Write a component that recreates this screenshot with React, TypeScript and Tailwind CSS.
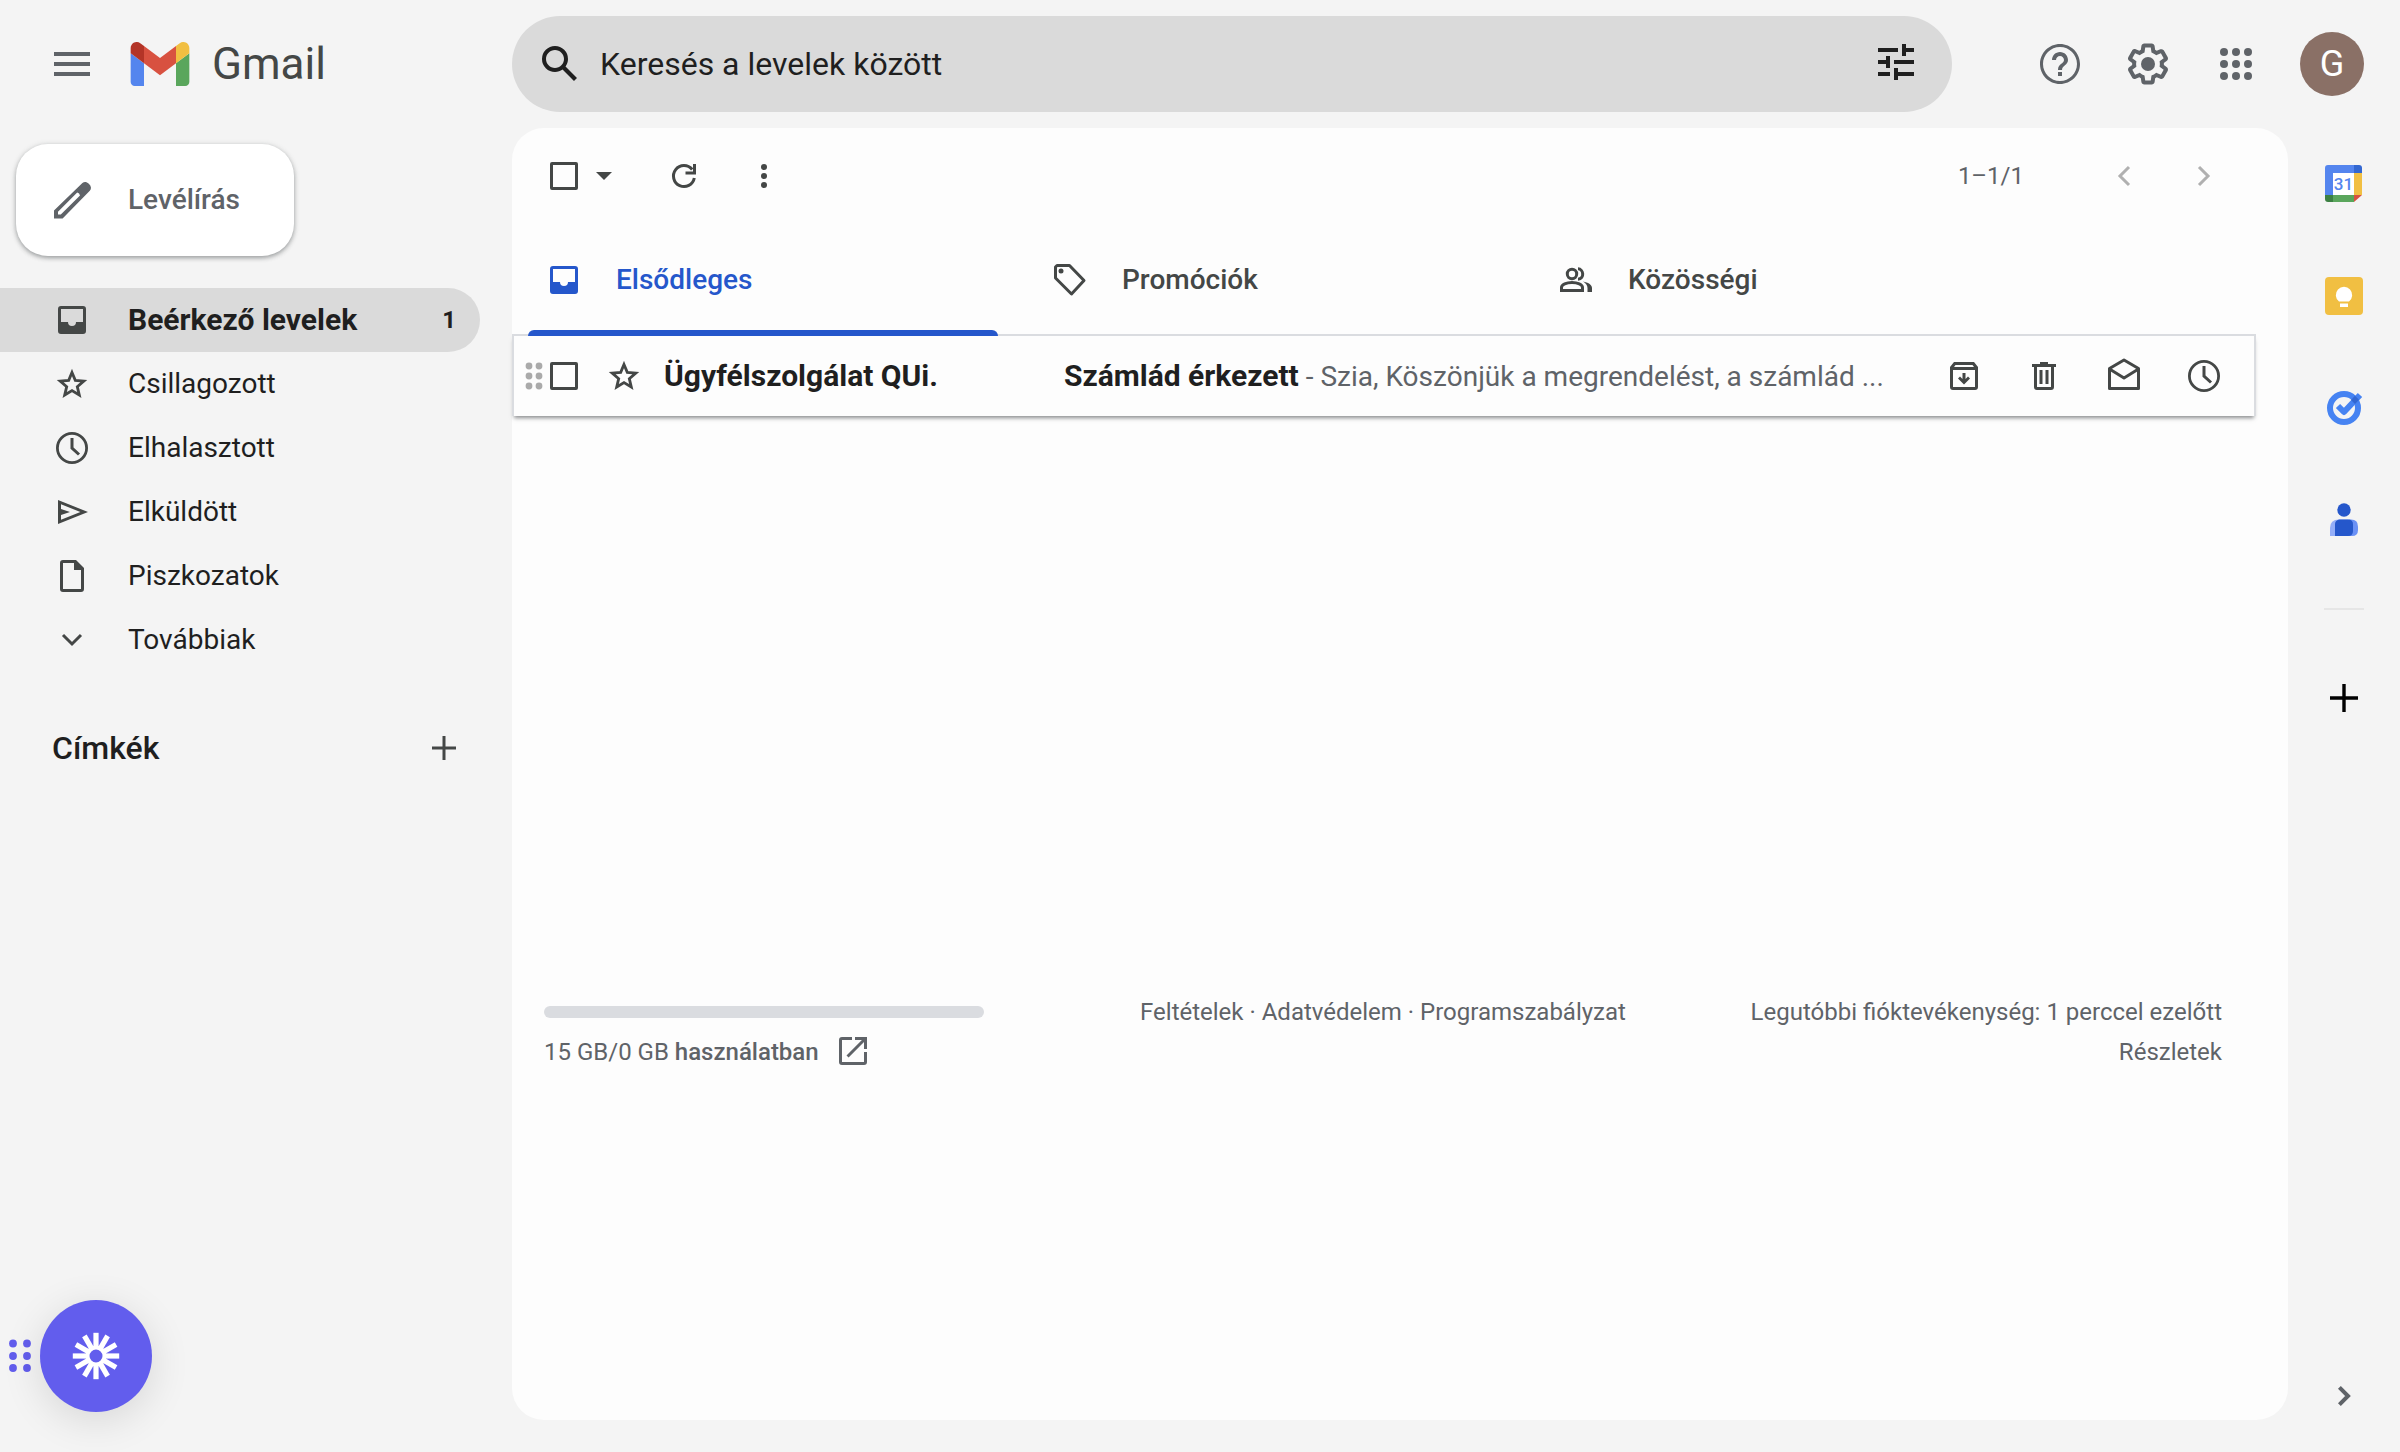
import React from 'react';

interface IconProps {
  children: React.ReactNode;
  className?: string;
  viewBox?: string;
}

const Icon: React.FC<IconProps> = ({ children, className = 'w-10 h-10', viewBox = '0 0 40 40' }) => (
  <svg className={`shrink-0 ${className}`} viewBox={viewBox} fill="currentColor" aria-hidden="true">
    {children}
  </svg>
);

const InboxIcon = () => (
  <Icon>
    <path
      fillRule="evenodd"
      d="M9 6h22a3 3 0 0 1 3 3v22a3 3 0 0 1-3 3H9a3 3 0 0 1-3-3V9a3 3 0 0 1 3-3zm0 3v13h7a4 4 0 0 0 8 0h7V9z"
    />
  </Icon>
);

const StarIcon = () => (
  <Icon>
    <path
      fill="none"
      stroke="currentColor"
      strokeWidth="2.8"
      d="M20 8.5l3.3 7.9 8.5.7-6.5 5.6 2 8.3-7.3-4.4-7.3 4.4 2-8.3-6.5-5.6 8.5-.7z"
    />
  </Icon>
);

const ClockIcon = () => (
  <Icon>
    <circle cx="20" cy="20" r="14.6" fill="none" stroke="currentColor" strokeWidth="2.8" />
    <path fill="none" stroke="currentColor" strokeWidth="3" d="M20 10v10l7 6.5" />
  </Icon>
);

const SendIcon = () => (
  <Icon>
    <path fillRule="evenodd" d="M6 8l30 12L6 32zm3 4.3V17l9 3-9 3v4.7L28.4 20z" />
  </Icon>
);

const FileIcon = () => (
  <Icon>
    <path
      fillRule="evenodd"
      d="M11 4h13l8 8v21a3 3 0 0 1-3 3H11a3 3 0 0 1-3-3V7a3 3 0 0 1 3-3zm0 3v26h18V14h-7V7z"
    />
  </Icon>
);

const ChevronDownIcon = () => (
  <Icon>
    <path fill="none" stroke="currentColor" strokeWidth="3" d="M11 15l9 9 9-9" />
  </Icon>
);

const TagIcon = () => (
  <Icon>
    <path
      fill="none"
      stroke="currentColor"
      strokeWidth="3"
      strokeLinejoin="round"
      d="M7 5.500h12.500L34 20.500 21.500 34 5.500 18V7z"
    />
    <circle cx="11" cy="11" r="2.500" />
  </Icon>
);

const PeopleIcon = () => (
  <Icon>
    <g fill="none" stroke="currentColor" strokeWidth="3">
      <circle cx="16" cy="14" r="4.700" />
      <path d="M5.500 30.500v-3c0-3 5-5 10.500-5s10.500 2 10.500 5v3z" />
      <path d="M22 8.800c5.500 0 7 10 0 10.400" />
    </g>
    <path d="M27 21.500c5 1 9 3 9 6.500v4h-4.500v-4c0-3-2-5-4.500-6.500z" />
  </Icon>
);

const GmailLogo = () => (
  <svg className="w-[60px] h-11 shrink-0" viewBox="52 42 88 66" aria-hidden="true">
    <path fill="#5485ee" d="M58 108h14V74L52 59v43c0 3.32 2.69 6 6 6" />
    <path fill="#5aa65c" d="M120 108h14c3.32 0 6-2.69 6-6V59l-20 15" />
    <path fill="#f1bf42" d="M120 48v26l20-15v-8c0-7.42-8.47-11.65-14.4-7.2" />
    <path fill="#d85140" d="M72 74V48l24 18 24-18v26L96 92" />
    <path fill="#b33427" d="M52 51v8l20 15V48l-5.6-4.2c-5.94-4.45-14.4-.22-14.4 7.2" />
  </svg>
);

const Header = () => (
  <header className="flex items-center h-32 pr-9 text-[#5f6368]">
    <div className="flex items-center w-[512px] shrink-0 pl-12">
      <button aria-label="Főmenü">
        <Icon className="w-12 h-12" viewBox="0 0 24 24">
          <path d="M3 18h18v-2H3v2zm0-5h18v-2H3v2zm0-7v2h18V6H3z" />
        </Icon>
      </button>
      <a href="#inbox" className="flex items-center gap-[22px] ml-[34px]">
        <GmailLogo />
        <span className="text-[44px] leading-[48px] text-[#444746]">Gmail</span>
      </a>
    </div>

    <form className="flex items-center flex-1 max-w-[1440px] h-24 pl-6 pr-8 gap-4 rounded-full bg-[#dadada] text-[#1f1f1f]">
      <button type="button" aria-label="Keresés">
        <Icon className="w-12 h-12" viewBox="0 0 24 24">
          <path d="M20.490 19l-5.730-5.730C15.530 12.200 16 10.910 16 9.500A6.500 6.500 0 1 0 9.500 16c1.410 0 2.700-.470 3.770-1.240L19 20.490 20.490 19zM5 9.500C5 7.010 7.010 5 9.500 5S14 7.010 14 9.500 11.990 14 9.500 14 5 11.990 5 9.500z" />
        </Icon>
      </button>
      <input
        type="text"
        aria-label="Keresés a levelek között"
        placeholder="Keresés a levelek között"
        className="flex-1 min-w-0 bg-transparent text-[32px] leading-10 outline-none placeholder:text-[#1f1f1f]"
      />
      <button type="button" aria-label="Speciális keresés">
        <Icon className="w-12 h-12" viewBox="0 1 24 24">
          <path d="M3 17v2h6v-2H3zM3 5v2h10V5H3zm10 16v-2h8v-2h-8v-2h-2v6h2zM7 9v2H3v2h4v2h2V9H7zm14 4v-2H11v2h10zm-6-4h2V7h4V5h-4V3h-2v6z" />
        </Icon>
      </button>
    </form>

    <div className="flex items-center gap-10 ml-auto">
      <button aria-label="Súgó">
        <Icon className="w-12 h-12" viewBox="0 0 24 24">
          <path d="M11 18h2v-2h-2v2zm1-16C6.480 2 2 6.480 2 12s4.480 10 10 10 10-4.480 10-10S17.520 2 12 2zm0 18.500c-4.690 0-8.500-3.810-8.500-8.500S7.310 3.500 12 3.500s8.500 3.810 8.500 8.500-3.810 8.500-8.500 8.500zM12 6c-2.210 0-4 1.790-4 4h2c0-1.100.9-2 2-2s2 .9 2 2c0 2-3 1.750-3 5h2c0-2.250 3-2.500 3-5 0-2.210-1.790-4-4-4z" />
        </Icon>
      </button>
      <button aria-label="Beállítások">
        <Icon className="w-12 h-12" viewBox="0 0 24 24">
          <path d="M13.850 22.250h-3.700c-.74 0-1.360-.54-1.450-1.270l-.27-1.890c-.27-.14-.53-.29-.79-.46l-1.800.72c-.7.26-1.470-.03-1.810-.65L2.200 15.530c-.35-.66-.2-1.440.36-1.880l1.530-1.190c-.01-.15-.02-.3-.02-.46 0-.15.01-.31.02-.46l-1.520-1.190c-.59-.45-.74-1.260-.37-1.880l1.850-3.190c.34-.62 1.110-.9 1.790-.63l1.810.73c.26-.17.52-.32.78-.46l.27-1.910c.09-.7.71-1.250 1.440-1.250h3.700c.74 0 1.360.54 1.450 1.270l.27 1.890c.27.14.53.29.79.46l1.800-.72c.71-.26 1.480.03 1.820.65l1.840 3.180c.36.66.2 1.440-.36 1.880l-1.520 1.190c.01.15.02.3.02.46s-.01.31-.02.46l1.520 1.190c.56.45.72 1.230.37 1.860l-1.860 3.220c-.34.62-1.110.9-1.800.63l-1.800-.72c-.26.17-.52.32-.78.46l-.27 1.910c-.1.68-.72 1.220-1.460 1.220zm-3.230-2h2.760l.37-2.550.53-.22c.44-.18.88-.44 1.340-.78l.45-.34 2.380.96 1.380-2.400-2.030-1.580.07-.56c.03-.26.06-.51.06-.78s-.03-.53-.06-.78l-.07-.56 2.030-1.580-1.390-2.400-2.390.96-.45-.35c-.42-.32-.87-.58-1.330-.77l-.52-.22-.37-2.550h-2.760l-.37 2.550-.53.21c-.44.19-.88.44-1.340.79l-.45.33-2.380-.95-1.390 2.390 2.030 1.580-.07.56a7 7 0 0 0-.06.79c0 .26.02.53.06.78l.07.56-2.030 1.580 1.380 2.400 2.390-.96.45.35c.43.33.86.58 1.330.77l.53.22.38 2.550z" />
          <circle cx="12" cy="12" r="3.5" />
        </Icon>
      </button>
      <button aria-label="Google-alkalmazások">
        <Icon className="w-12 h-12" viewBox="0 0 24 24">
          {[6, 12, 18].map((y) => [6, 12, 18].map((x) => <circle key={`${x}-${y}`} cx={x} cy={y} r="2" />))}
        </Icon>
      </button>
      <button className="w-16 h-16 rounded-full bg-[#8a7066] text-white text-4xl">G</button>
    </div>
  </header>
);

const Sidebar = () => {
  const navItems = [
    { id: 'inbox', label: 'Beérkező levelek', icon: <InboxIcon />, count: 1 },
    { id: 'starred', label: 'Csillagozott', icon: <StarIcon /> },
    { id: 'snoozed', label: 'Elhalasztott', icon: <ClockIcon /> },
    { id: 'sent', label: 'Elküldött', icon: <SendIcon /> },
    { id: 'drafts', label: 'Piszkozatok', icon: <FileIcon /> },
    { id: 'more', label: 'Továbbiak', icon: <ChevronDownIcon /> },
  ];

  return (
    <aside className="w-[512px] shrink-0 pr-8 pt-4">
      <button className="flex items-center gap-8 w-[278px] h-28 ml-4 pl-8 rounded-[32px] bg-white text-[28px] font-medium text-[#5f6368] shadow-[0_2px_4px_rgba(60,64,67,0.4),0_1px_6px_rgba(60,64,67,0.15)]">
        <Icon className="w-12 h-12" viewBox="0 0 24 24">
          <path
            fillRule="evenodd"
            d="M20.400 3.900c-1.200-1.200-2.300-1.200-3.200-.35L3 17.250V21.300h4.300L20.900 7.400c.9-1 .8-2.300-.5-3.500zM6.400 19.300H5v-1.400l9.600-9.600q1.200.2 1.400 1.400z"
          />
        </Icon>
        Levélírás
      </button>

      <nav className="mt-8">
        {navItems.map((item) => (
          <a
            key={item.id}
            href={`#${item.id}`}
            className={`flex items-center h-16 pl-[52px] pr-6 gap-9 rounded-r-full leading-10 ${
              item.count ? 'bg-[#dadada] text-3xl font-bold' : 'text-[28px]'
            }`}
          >
            <span className="text-[#444746]">{item.icon}</span>
            <span className="flex-1">{item.label}</span>
            {item.count && <span className="text-2xl">{item.count}</span>}
          </a>
        ))}
      </nav>

      <div className="flex items-center justify-between mt-14 pl-[52px] pr-4">
        <h2 className="text-[32px] leading-10 font-medium">Címkék</h2>
        <button aria-label="Új címke" className="text-[#444746]">
          <Icon>
            <path d="M8 18.500h24v3H8zM18.500 8h3v24h-3z" />
          </Icon>
        </button>
      </div>
    </aside>
  );
};

const Toolbar = () => (
  <div className="flex items-center h-24 pl-[38px] pr-16 text-[#444746]">
    <input
      type="checkbox"
      aria-label="Összes kijelölése"
      className="w-7 h-7 appearance-none rounded-xs border-3 border-[#444746]"
    />
    <button aria-label="Kijelölés" className="ml-1.5">
      <Icon>
        <path d="M12 16h16l-8 8z" />
      </Icon>
    </button>
    <button aria-label="Frissítés" className="ml-10">
      <Icon>
        <path fill="none" stroke="currentColor" strokeWidth="3" d="M28.200 13.500A10.500 10.500 0 1 0 30.300 22" />
        <path d="M32 8v10.500H21.500v-3H29V8z" />
      </Icon>
    </button>
    <button aria-label="Továbbiak" className="ml-10">
      <Icon>
        <circle cx="20" cy="11" r="3" />
        <circle cx="20" cy="20" r="3" />
        <circle cx="20" cy="29" r="3" />
      </Icon>
    </button>
    <span className="ml-auto text-2xl text-[#5f6368]">1–1/1</span>
    <div className="flex gap-10 ml-20 text-[#b0b0b0]">
      <button aria-label="Újabbak">
        <Icon>
          <path fill="none" stroke="currentColor" strokeWidth="3" d="M25 11l-9 9 9 9" />
        </Icon>
      </button>
      <button aria-label="Régebbiek">
        <Icon>
          <path fill="none" stroke="currentColor" strokeWidth="3" d="M15 11l9 9-9 9" />
        </Icon>
      </button>
    </div>
  </div>
);

const Tabs = () => {
  const tabs = [
    { label: 'Elsődleges', icon: <InboxIcon />, active: true },
    { label: 'Promóciók', icon: <TagIcon />, active: false },
    { label: 'Közösségi', icon: <PeopleIcon />, active: false },
  ];

  return (
    <div role="tablist" className="flex mr-8">
      {tabs.map((tab) => (
        <button
          key={tab.label}
          role="tab"
          aria-selected={tab.active}
          className={`relative flex items-center gap-8 w-[506px] h-28 pl-8 text-[28px] font-medium ${
            tab.active ? 'text-[#2557cb]' : 'text-[#444746]'
          }`}
        >
          {tab.icon}
          {tab.label}
          {tab.active && <span className="absolute left-4 right-5 bottom-0 z-10 h-1.5 rounded-t-md bg-[#2557cb]" />}
        </button>
      ))}
    </div>
  );
};

const MailRow = () => (
  <li className="flex items-center h-[82px] -mt-0.5 mr-8 pl-[10px] pr-[30px] border-2 border-b-0 border-[#dadce0] text-[28px] leading-10 text-[#444746] shadow-[0_4px_4px_-2px_rgba(60,64,67,0.6)]">
    <Icon className="w-5 h-8 text-[#aaaaaa]" viewBox="0 0 20 32">
      {[6, 16, 26].map((y) => [5, 15].map((x) => <circle key={`${x}-${y}`} cx={x} cy={y} r="3.4" />))}
    </Icon>
    <input
      type="checkbox"
      aria-label="Levél kijelölése"
      className="w-7 h-7 ml-1.5 shrink-0 appearance-none rounded-xs border-3 border-[#444746]"
    />
    <button aria-label="Csillagozás" className="ml-[26px]">
      <StarIcon />
    </button>
    <span className="w-[400px] ml-5 shrink-0 truncate text-3xl leading-10 font-bold text-[#1f1f1f]">
      Ügyfélszolgálat QUi.
    </span>
    <a href="#message" className="flex-1 min-w-0 truncate text-[#5f6368]">
      <b className="text-3xl leading-10 text-[#1f1f1f]">Számlád érkezett</b> - Szia, Köszönjük a megrendelést, a számlád ...
    </a>
    <div className="flex gap-10">
      <button aria-label="Archiválás">
        <Icon>
          <path
            fillRule="evenodd"
            d="M10 6h20l4 5v20a3 3 0 0 1-3 3H9a3 3 0 0 1-3-3V11zm1.500 3L10 11h20l-1.500-2zM9 14v17h22V14z"
          />
          <path d="M18.500 17h3v6l2.500-2.500 2 2-6 6-6-6 2-2 2.500 2.500z" />
        </Icon>
      </button>
      <button aria-label="Törlés">
        <Icon>
          <path
            fillRule="evenodd"
            d="M16 6h8v2h8v3h-2v20a3 3 0 0 1-3 3H13a3 3 0 0 1-3-3V11H8V8h8zm-3 5v20h14V11zm2.500 3h3v14h-3zm6 0h3v14h-3z"
          />
        </Icon>
      </button>
      <button aria-label="Megjelölés olvasottként">
        <Icon>
          <g fill="none" stroke="currentColor" strokeWidth="3" strokeLinejoin="round">
            <path d="M5.500 12.500L20 4l14.500 8.500v20h-29z" />
            <path d="M5.500 13L20 22l14.500-9" />
          </g>
        </Icon>
      </button>
      <button aria-label="Elhalasztás">
        <ClockIcon />
      </button>
    </div>
  </li>
);

const Footer = () => (
  <footer className="grid grid-cols-3 mt-[576px] pl-8 pr-[66px] text-2xl leading-10 text-[#5f6368]">
    <div>
      <div className="flex items-center h-10">
        <div className="w-[440px] h-3 rounded-md bg-[#dadce0]" />
      </div>
      <a href="#storage" className="flex items-center gap-3.5">
        <span>
          15 GB/0 GB <span className="font-medium">használatban</span>
        </span>
        <Icon>
          <path d="M9 5h10v3H9v22h22V20h3v10a3 3 0 0 1-3 3H9a3 3 0 0 1-3-3V8a3 3 0 0 1 3-3zM22 5h12v12h-3v-6.900L15.600 25.500l-2.100-2.100L28.900 8H22z" />
        </Icon>
      </a>
    </div>
    <p className="text-center whitespace-nowrap">
      <a href="#terms">Feltételek</a> · <a href="#privacy">Adatvédelem</a> · <a href="#policy">Programszabályzat</a>
    </p>
    <div className="text-right whitespace-nowrap">
      <p>Legutóbbi fióktevékenység: 1 perccel ezelőtt</p>
      <a href="#details">Részletek</a>
    </div>
  </footer>
);

const SidePanel = () => (
  <aside className="flex flex-col items-center w-28 shrink-0 pt-9">
    <div className="flex flex-col gap-[72px]">
      <button aria-label="Naptár">
        <Icon>
          <path fill="#5485ee" d="M4 1h27v8H9v22H1V4a3 3 0 0 1 3-3z" />
          <path fill="#3367d1" d="M30 1h5a3 3 0 0 1 3 3v5h-8z" />
          <path fill="#f1bf42" d="M30 9h8v22h-8z" />
          <path fill="#5aa65c" d="M8 31h22v7H8z" />
          <path fill="#3c8043" d="M1 31h8v7H4a3 3 0 0 1-3-3z" />
          <path fill="#d85140" d="M30 31h8l-8 7z" />
          <path fill="#fff" d="M9 9h21v22H9z" />
          <text x="19.5" y="26" textAnchor="middle" fill="#5485ee" fontSize="17" fontWeight="500">31</text>
        </Icon>
      </button>
      <button aria-label="Keep">
        <Icon>
          <rect x="1" y="1" width="38" height="38" rx="4" fill="#f1bf42" />
          <path fill="#fff" d="M15 25.500a8.200 8.200 0 1 1 10 0zM16 27.500h8v3.500h-8z" />
        </Icon>
      </button>
      <button aria-label="Tasks">
        <Icon>
          <circle cx="20" cy="20" r="14" fill="none" stroke="#4683f2" strokeWidth="6" />
          <path fill="none" stroke="#4683f2" strokeWidth="6" strokeLinejoin="round" d="M14 18l6 6L36 7" />
          <path fill="#3367d1" d="M27 12l4-4.200 4 4-4 4.200z" />
        </Icon>
      </button>
      <button aria-label="Névjegyek">
        <Icon>
          <circle cx="20" cy="10" r="6.700" fill="#2557cb" />
          <path fill="#94aef8" d="M15 19.500h10V36H6V28q0-8.500 9-8.500z" />
          <path fill="#6a91f5" d="M25 19.500h2q7 0 7 7V30q0 6-6 6h-4z" />
          <path fill="#2557cb" d="M15 19.500h9q5 0 5 5V31q0 5-5 5H11V24q0-3.500 4-4.500z" />
        </Icon>
      </button>
    </div>
    <hr className="w-10 mt-[68px] border-t-2 border-[#e6e6e6]" />
    <button aria-label="Bővítmények letöltése" className="mt-[68px] text-black">
      <Icon>
        <path d="M6 18.300h28v3.400H6zM18.300 6h3.400v28h-3.400z" />
      </Icon>
    </button>
    <button aria-label="Oldalsó panel elrejtése" className="mt-auto mb-1 text-[#5f6368]">
      <Icon>
        <path fill="none" stroke="currentColor" strokeWidth="4" d="M15.400 11.400l8.600 8.600-8.600 8.600" />
      </Icon>
    </button>
  </aside>
);

// Floating recorder widget pinned to the bottom left corner
const RecorderBubble = () => (
  <div className="fixed left-2 bottom-10 flex items-center gap-2 text-[#625ded]">
    <Icon className="w-6 h-9" viewBox="0 0 24 36">
      {[5.5, 18, 30].map((y) => [5, 19].map((x) => <circle key={`${x}-${y}`} cx={x} cy={y} r="3.9" />))}
    </Icon>
    <button
      aria-label="Felvétel"
      className="flex items-center justify-center w-28 h-28 rounded-full bg-[#625ded] text-white shadow-[0_8px_40px_rgba(0,0,0,0.12)]"
    >
      <Icon className="w-12 h-12" viewBox="-24 -24 48 48">
        <circle r="8.500" fill="none" stroke="currentColor" strokeWidth="4" />
        {[0, 30, 60, 90, 120, 150, 180, 210, 240, 270, 300, 330].map((angle) => (
          <rect key={angle} x="-2.600" y="-23.200" width="5.200" height="15" transform={`rotate(${angle})`} />
        ))}
      </Icon>
    </button>
  </div>
);

const App = () => (
  <div className="flex flex-col min-h-screen bg-[#f4f4f4] font-[Roboto,sans-serif] text-[#1f1f1f]">
    <Header />
    <div className="flex flex-1 pb-8">
      <Sidebar />
      <main className="flex-1 min-w-0 pb-10 rounded-[32px] bg-[#fdfdfd]">
        <Toolbar />
        <Tabs />
        <ul>
          <MailRow />
        </ul>
        <Footer />
      </main>
      <SidePanel />
    </div>
    <RecorderBubble />
  </div>
);

export default App;
